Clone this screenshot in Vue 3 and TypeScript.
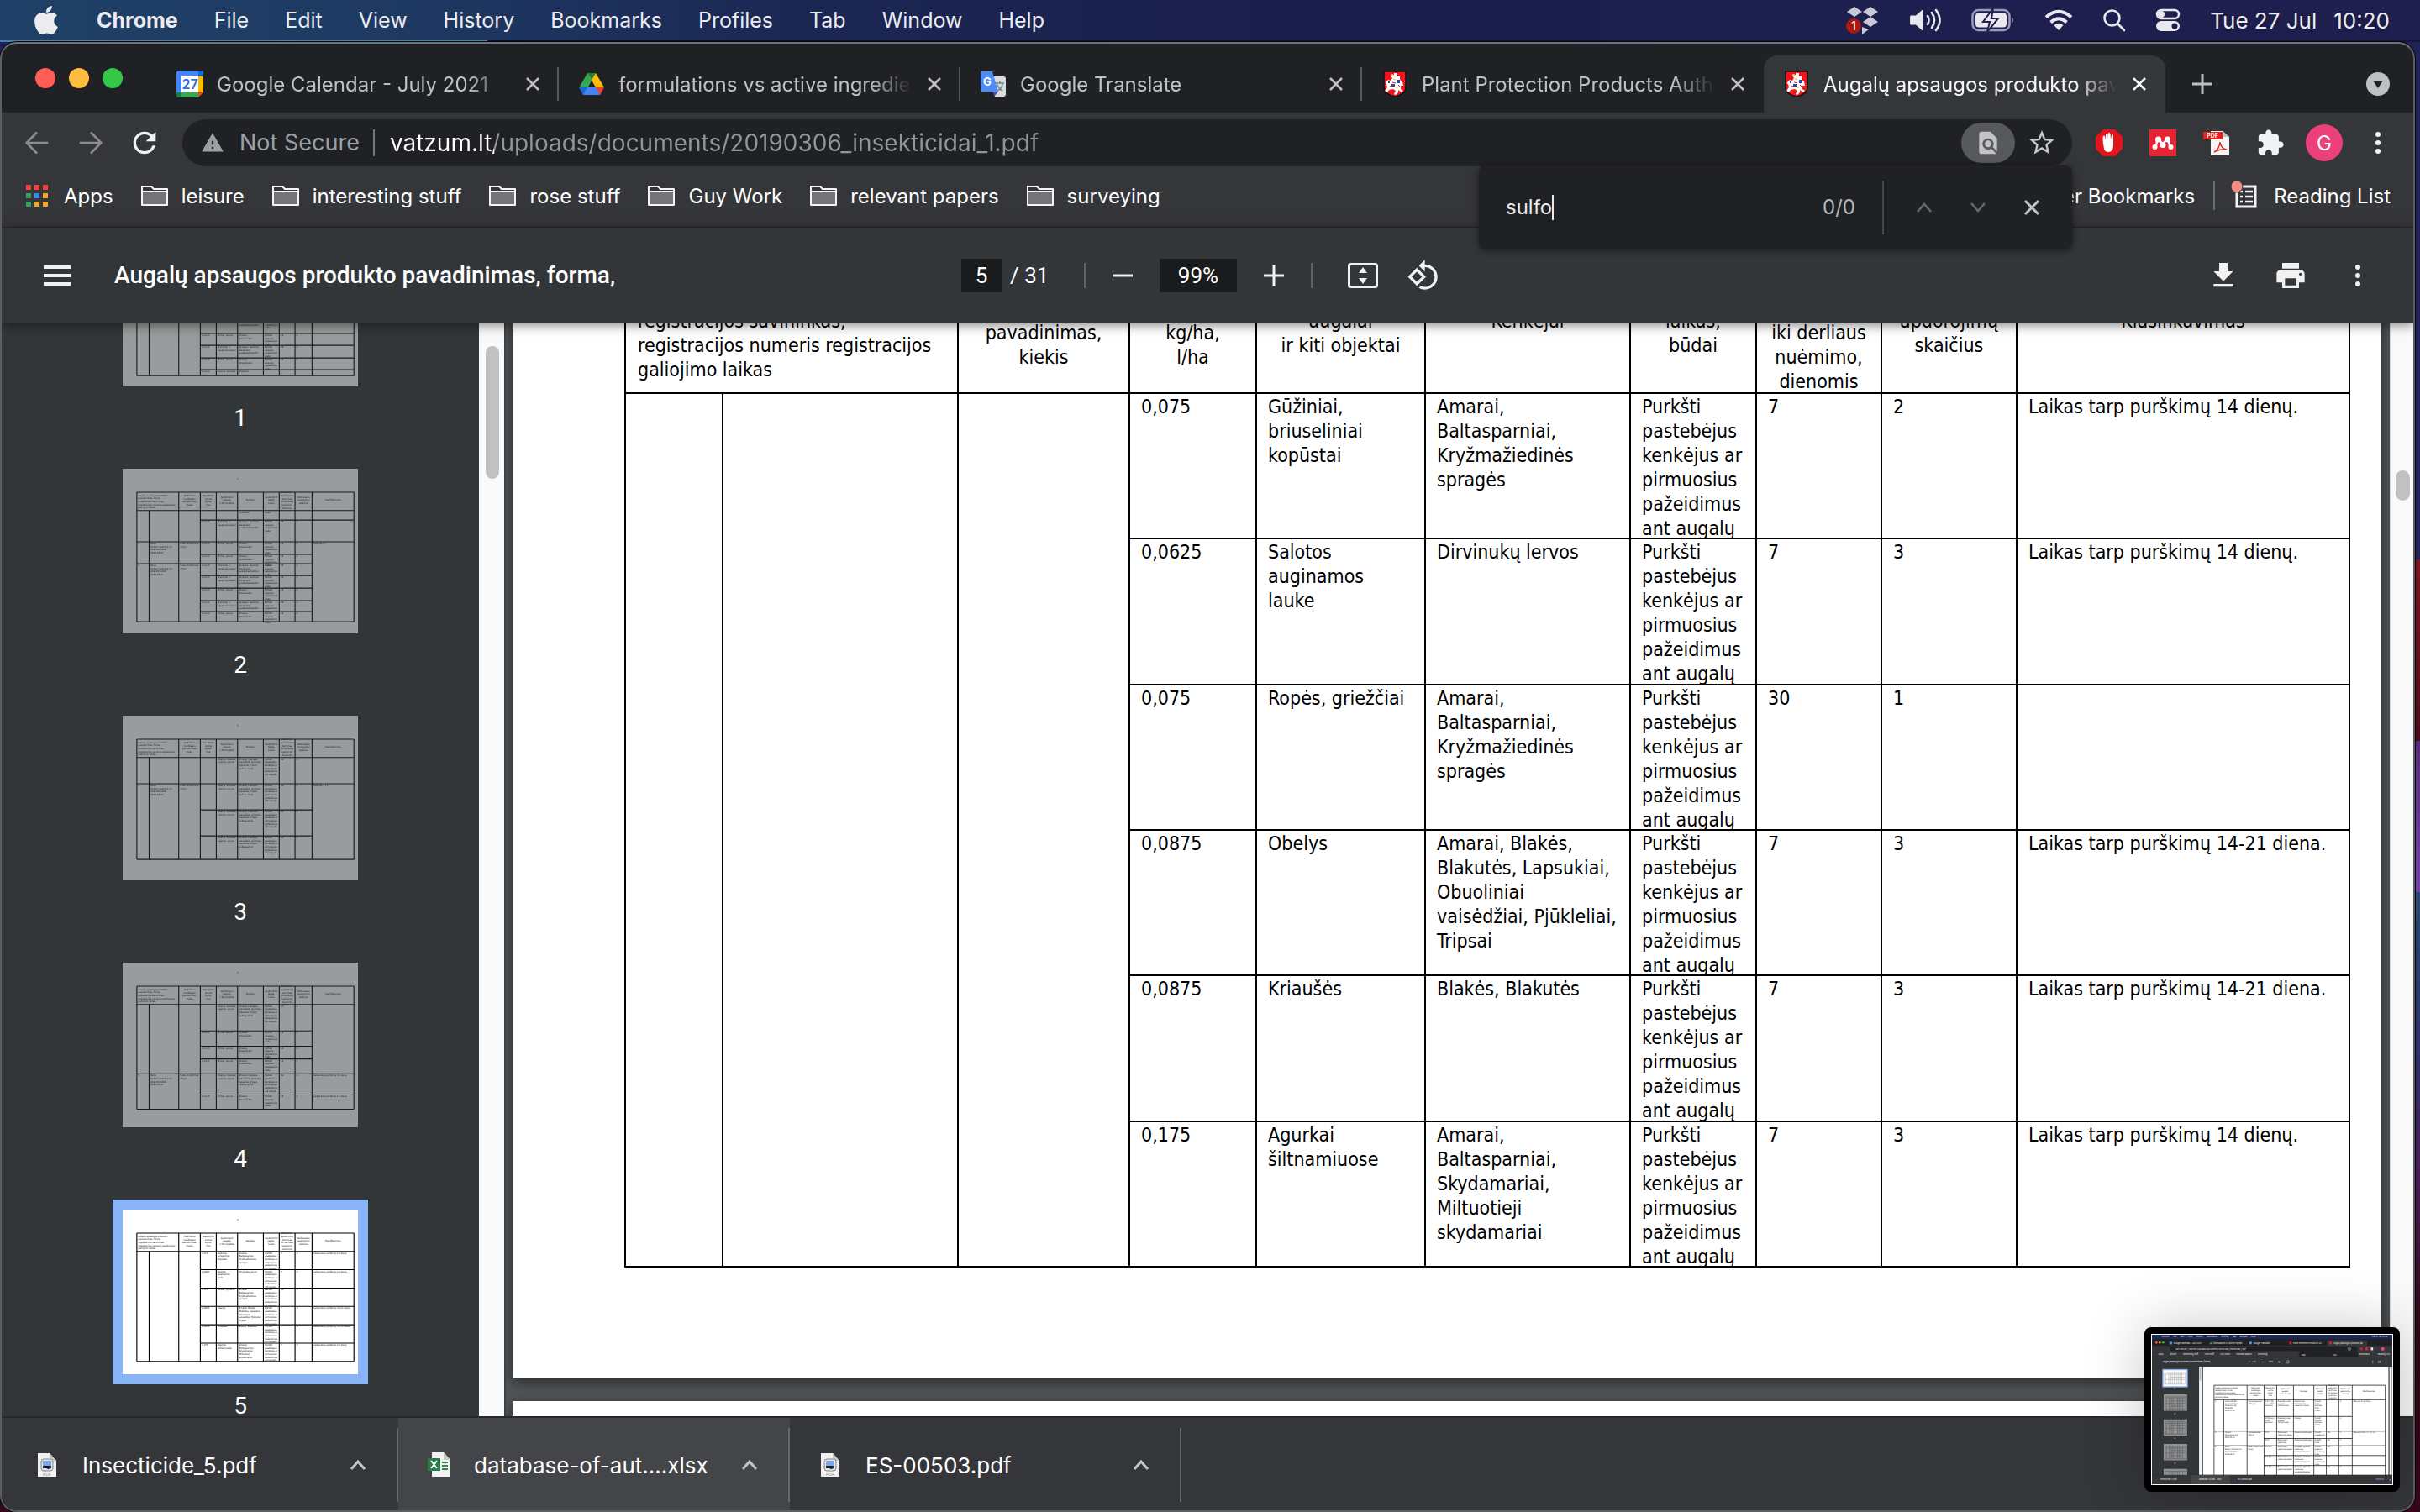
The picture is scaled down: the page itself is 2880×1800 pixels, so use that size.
<script setup lang="ts">
import { onMounted, ref } from 'vue'

interface Tab { title: string; icon: string; active?: boolean }
interface Row { dose: string; crop: string[]; pests: string[]; days: string; times: string; note: string }
interface MiniCell { c: number; t: string[] }
interface MiniRow { y: number; from: number; to: number; cells: MiniCell[] }
interface Thumb { page: number; bottom: number; rows: MiniRow[] }

const menus: string[] = ['File', 'Edit', 'View', 'History', 'Bookmarks', 'Profiles', 'Tab', 'Window', 'Help']

const tabs: Tab[] = [
  { title: 'Google Calendar - July 2021', icon: 'calendar' },
  { title: 'formulations vs active ingredie', icon: 'drive' },
  { title: 'Google Translate', icon: 'translate' },
  { title: 'Plant Protection Products Auth', icon: 'shield' },
  { title: 'Augalų apsaugos produkto pav', icon: 'shield', active: true },
]

const bookmarks: string[] = ['leisure', 'interesting stuff', 'rose stuff', 'Guy Work', 'relevant papers', 'surveying']

const downloads = [
  { name: 'Insecticide_5.pdf', kind: 'pdf' },
  { name: 'database-of-aut....xlsx', kind: 'xls' },
  { name: 'ES-00503.pdf', kind: 'pdf' },
]

const columnWidths: number[] = [116, 280, 204, 151, 201, 244, 150, 149, 161, 396]

const header: string[][] = [
  ['Veikliosios', 'medžiagos', 'pavadinimas,', 'kiekis'],
  ['Naudojimo', 'norma', 'kg/ha,', 'l/ha'],
  ['Apdorojami', 'augalai', 'ir kiti objektai'],
  ['Kenkėjai'],
  ['Apdorojimo', 'laikas,', 'būdai'],
  ['Paskutinis', 'apdorojimo', 'terminas', 'iki derliaus', 'nuėmimo,', 'dienomis'],
  ['Didžiausias', 'apdorojimų', 'skaičius'],
  ['Klasifikavimas'],
]
const firstHeader: string[] = [
  'Augalų apsaugos produkto', 'pavadinimas, forma,', 'registracijos savininkas,',
  'registracijos numeris registracijos', 'galiojimo laikas',
]
const method: string[] = ['Purkšti', 'pastebėjus', 'kenkėjus ar', 'pirmuosius', 'pažeidimus', 'ant augalų']

const rows: Row[] = [
  { dose: '0,075', crop: ['Gūžiniai,', 'briuseliniai', 'kopūstai'], pests: ['Amarai,', 'Baltasparniai,', 'Kryžmažiedinės', 'spragės'], days: '7', times: '2', note: 'Laikas tarp purškimų 14 dienų.' },
  { dose: '0,0625', crop: ['Salotos', 'auginamos', 'lauke'], pests: ['Dirvinukų lervos'], days: '7', times: '3', note: 'Laikas tarp purškimų 14 dienų.' },
  { dose: '0,075', crop: ['Ropės, griežčiai'], pests: ['Amarai,', 'Baltasparniai,', 'Kryžmažiedinės', 'spragės'], days: '30', times: '1', note: '' },
  { dose: '0,0875', crop: ['Obelys'], pests: ['Amarai, Blakės,', 'Blakutės, Lapsukiai,', 'Obuoliniai', 'vaisėdžiai, Pjūkleliai,', 'Tripsai'], days: '7', times: '3', note: 'Laikas tarp purškimų 14-21 diena.' },
  { dose: '0,0875', crop: ['Kriaušės'], pests: ['Blakės, Blakutės'], days: '7', times: '3', note: 'Laikas tarp purškimų 14-21 diena.' },
  { dose: '0,175', crop: ['Agurkai', 'šiltnamiuose'], pests: ['Amarai,', 'Baltasparniai,', 'Skydamariai,', 'Miltuotieji', 'skydamariai'], days: '7', times: '3', note: 'Laikas tarp purškimų 14 dienų.' },
]

/* Column edges of the registry table, in page units */
const edges: number[] = [134, 250, 530, 734, 885, 1086, 1330, 1480, 1629, 1790, 2186]

const spray: string[] = ['Purkšti', 'augalus', 'vegetacijos', 'metu']
const often: MiniCell[] = [
  { c: 3, t: ['0,2-0,3'] }, { c: 4, t: ['Žieminiai ir', 'vasariniai rapsai'] },
  { c: 5, t: ['Spragės, rapsiniai', 'žiedinukai,', 'paslėptastraubliai'] }, { c: 6, t: spray }, { c: 7, t: ['56'] }, { c: 8, t: ['2'] },
]
const veg: MiniCell[] = [
  { c: 3, t: ['0,2-0,3'] }, { c: 4, t: ['Žirniai, pupos'] },
  { c: 5, t: ['Amarai,', 'straubliukai'] }, { c: 6, t: spray }, { c: 7, t: ['14'] }, { c: 8, t: ['2'] },
]
const owner: MiniCell[] = [
  { c: 0, t: ['5.'] }, { c: 1, t: ['Kaiso', 'Nufarm GmbH & Co', 'AS2-11I(2018)', '2028-08-24'] }, { c: 2, t: ['Beta-cihalotrinas', '25 g/l'] },
]
const leaf: MiniCell[] = [{ c: 4, t: ['Obelys, kriaušės,', 'vyšnios, slyvos'] }, { c: 5, t: ['Amarai, blakutės,', 'vaisėdžiai, pjūkleliai,', 'lapsukiai, tripsai,', 'baltasparniai'] }, { c: 6, t: method }, { c: 7, t: ['30'] }, { c: 8, t: ['2'] }]

const thumbs: Thumb[] = [
  { page: 1, bottom: 1454, rows: [
    { y: 395, from: 0, to: 10, cells: often },
    { y: 900, from: 3, to: 10, cells: often },
    { y: 1056, from: 3, to: 10, cells: veg },
    { y: 1168, from: 3, to: 10, cells: often },
    { y: 1287, from: 3, to: 10, cells: veg },
    { y: 1398, from: 3, to: 10, cells: [{ c: 3, t: ['0,2-0,3'] }, { c: 4, t: ['Obelys, kriaušės'] }, { c: 5, t: ['Blakutės,'] }] },
  ] },
  { page: 2, bottom: 1446, rows: [
    { y: 395, from: 0, to: 10, cells: [{ c: 5, t: ['straubliai'] }, { c: 6, t: ['metu'] }] },
    { y: 485, from: 3, to: 10, cells: often },
    { y: 691, from: 0, to: 10, cells: [...owner, ...veg, { c: 9, t: ['Pakuotė 5 l.'] }] },
    { y: 810, from: 3, to: 9, cells: veg },
    { y: 898, from: 0, to: 9, cells: [...owner, ...often] },
    { y: 1009, from: 3, to: 9, cells: often },
    { y: 1128, from: 3, to: 9, cells: veg },
    { y: 1247, from: 3, to: 9, cells: often },
    { y: 1350, from: 3, to: 9, cells: veg },
  ] },
  { page: 3, bottom: 1358, rows: [
    { y: 395, from: 0, to: 10, cells: leaf },
    { y: 643, from: 0, to: 10, cells: [...owner, ...leaf, { c: 9, t: ['Pakuotė 1 l; 5 l.'] }] },
    { y: 890, from: 3, to: 9, cells: leaf },
    { y: 1136, from: 3, to: 9, cells: leaf },
  ] },
  { page: 4, bottom: 1386, rows: [
    { y: 395, from: 0, to: 10, cells: leaf },
    { y: 645, from: 3, to: 9, cells: veg },
    { y: 790, from: 3, to: 9, cells: veg },
    { y: 910, from: 3, to: 9, cells: veg },
    { y: 1050, from: 0, to: 10, cells: [...owner, ...leaf, { c: 9, t: ['Laikas tarp purškimų 14 dienų.'] }] },
    { y: 1250, from: 3, to: 10, cells: [...veg, { c: 9, t: ['Laikas tarp purškimų 14 dienų.'] }] },
  ] },
  { page: 5, bottom: 1435, rows: rows.map((r, i) => ({
    y: 395 + Math.round(i * 173.4), from: i ? 3 : 0, to: 10,
    cells: [
      { c: 3, t: [r.dose] }, { c: 4, t: r.crop }, { c: 5, t: r.pests }, { c: 6, t: method },
      { c: 7, t: [r.days] }, { c: 8, t: [r.times] }, { c: 9, t: [r.note] },
    ],
  })) },
]

/* Rows shown in the floating capture preview */
const previewRows: MiniRow[] = [
  { y: 782, from: 0, to: 10, cells: [{ c: 0, t: ['1.'] }, { c: 1, t: ['Actara 25 WG', 'Syngenta Crop', 'Protection AG,', '0152I/08,', '2019-04-30'] }, { c: 2, t: ['Tiametoksamas', '250 g/kg'] }, { c: 3, t: ['0,04-0,06', 'kg ir 1000', 'vandens'] }, { c: 4, t: ['Dekoratyviniai', 'augalai', 'šiltnamiuose'] }, { c: 5, t: ['Šiltnaminiai', 'baltasparniai,', 'vakariniai tripsai'] }, { c: 6, t: ['Purkšti', 'tiriamų', 'atitinka', '0,04-', '0,06%'] }, { c: 8, t: ['2'] }, { c: 9, t: ['Pakuotė 40 g, 250 g.'] }] },
  { y: 984, from: 3, to: 9, cells: [{ c: 3, t: ['10,02 kg ir', '1000', 'vandens'] }, { c: 4, t: ['Dekoratyviniai', 'augalai', 'šiltnamiuose'] }, { c: 5, t: ['Amarai'] }, { c: 6, t: ['Purkšti', 'tiriamų', 'atitinka', '0,02%'] }, { c: 8, t: ['2'] }] },
  { y: 1161, from: 0, to: 10, cells: [{ c: 0, t: ['2.'] }, { c: 1, t: ['Avaunt', 'Cheminova A/S,', '2020-10-31'] }, { c: 2, t: ['Indoksakarbas', '150 g/l'] }, { c: 3, t: ['0,17'] }, { c: 4, t: ['Žieminiai ir', 'vasariniai rapsai'] }, { c: 5, t: ['Rapsiniai žiedinukai'] }, { c: 6, t: ['Purkšti', 'vegetacijos'] }, { c: 7, t: ['56'] }, { c: 8, t: ['1'] }, { c: 9, t: ['Pakuotė 0,25 l; 1 l; 3 l; 5 l.'] }] },
  { y: 1249, from: 3, to: 9, cells: [{ c: 3, t: ['0,17'] }, { c: 4, t: ['Žieminiai ir', 'vasariniai'] }, { c: 5, t: ['Rapsiniai žiedinukai'] }, { c: 6, t: ['Purkšti', 'metu'] }, { c: 7, t: ['56'] }, { c: 8, t: ['1'] }] },
  { y: 1336, from: 0, to: 10, cells: [...owner, ...often] },
  { y: 1454, from: 3, to: 10, cells: often },
  { y: 1574, from: 3, to: 10, cells: often.filter((c) => c.c !== 6) },
]

const findText = ref('sulfo')
const url = ref('vatzum.lt/uploads/documents/20190306_insekticidai_1.pdf')
const pageNumber = ref('5')
const zoom = ref('99%')
const sidebar = ref<HTMLElement | null>(null)
const viewer = ref<HTMLElement | null>(null)

/* Reading position in the document and in the thumbnail list */
onMounted(() => {
  if (sidebar.value) sidebar.value.scrollTop = 144
  if (viewer.value) viewer.value.scrollTop = 321
})
</script>

<template>
  <div class="desktop">
    <header class="menubar">
      <nav class="menus" aria-label="Menu bar">
        <button class="menu apple" aria-label="Apple menu">
          <svg width="34" height="34" viewBox="0 0 24 24" fill="#ececee"><path d="M12.152 6.896c-.948 0-2.415-1.078-3.96-1.04-2.04.027-3.91 1.183-4.961 3.014-2.117 3.675-.546 9.103 1.519 12.09 1.013 1.454 2.208 3.09 3.792 3.039 1.52-.065 2.09-.987 3.935-.987 1.831 0 2.35.987 3.96.948 1.637-.026 2.676-1.48 3.676-2.948 1.156-1.688 1.636-3.325 1.662-3.415-.039-.013-3.182-1.221-3.22-4.857-.026-3.04 2.48-4.494 2.597-4.559-1.429-2.09-3.623-2.324-4.39-2.376-2-.156-3.675 1.09-4.61 1.09zM15.53 3.83c.843-1.012 1.4-2.427 1.245-3.83-1.207.052-2.662.805-3.532 1.818-.78.896-1.454 2.338-1.273 3.714 1.338.104 2.715-.688 3.559-1.701" /></svg>
        </button>
        <button class="menu strong">Chrome</button>
        <button v-for="m in menus" :key="m" class="menu">{{ m }}</button>
      </nav>
      <div class="status">
        <svg width="42" height="36" viewBox="0 0 42 36">
          <path d="M11 2l9 6-9 6-9-6zM30 2l9 6-9 6-9-6zM30 14l9 6-9 6-9-6zM20 26l8 3-8 6z" fill="#c9cad6" />
          <circle cx="10" cy="25" r="9" fill="#ad1a10" />
          <text x="10" y="30" fill="#fff" font-size="14" text-anchor="middle" class="ui">1</text>
        </svg>
        <svg width="38" height="30" viewBox="0 0 38 30" fill="none" stroke="#e8e8ee" stroke-width="2.6" stroke-linecap="round">
          <path d="M1 10h6l8-7v24l-8-7H1z" fill="#e8e8ee" stroke-width="1" /><path d="M21 10q3 5 0 10M26 6q6 9 0 18M31 3q9 12 0 24" />
        </svg>
        <svg width="52" height="28" viewBox="0 0 52 28">
          <rect x="1.500" y="2" width="44" height="24" rx="7" fill="none" stroke="#9c9cb6" stroke-width="2.500" />
          <rect x="5" y="5.500" width="37" height="17" rx="4" fill="#e8e8ee" /><path d="M48 10q4 4 0 8z" fill="#9c9cb6" />
          <path d="M26 0L14 16h8l-3 12 13-16h-8z" fill="#e8e8ee" stroke="#1e1e4e" stroke-width="2" />
        </svg>
        <svg width="34" height="26" viewBox="0 0 34 26" fill="none" stroke="#e8e8ee" stroke-width="4">
          <path d="M2 9.500Q17-4 32 9.500M7.500 15.500Q17 7 26.500 15.500" /><path d="M17 25l-5.500-6Q17 14.500 22.500 19z" fill="#e8e8ee" stroke="none" />
        </svg>
        <svg width="28" height="28" viewBox="0 0 28 28" fill="none" stroke="#e8e8ee" stroke-width="2.600" stroke-linecap="round"><circle cx="11.500" cy="11.500" r="9" /><path d="M18 18l8 8" /></svg>
        <svg width="30" height="28" viewBox="0 0 30 28">
          <rect x="2" y="2" width="26" height="10" rx="5" fill="none" stroke="#e8e8ee" stroke-width="2.500" /><circle cx="7" cy="7" r="4" fill="#e8e8ee" />
          <rect x="1" y="15" width="28" height="12" rx="6" fill="#e8e8ee" /><circle cx="23" cy="21" r="3.500" fill="#1e1e4e" />
        </svg>
        <time class="clock"><span>Tue 27 Jul</span><span>10:20</span></time>
      </div>
    </header>

    <main class="window">
      <div class="tabstrip">
        <div class="lights">
          <button class="light red" aria-label="Close window"></button>
          <button class="light amber" aria-label="Minimise window"></button>
          <button class="light green" aria-label="Zoom window"></button>
        </div>
        <div v-for="(t, i) in tabs" :key="i" class="tab" :class="{ active: t.active, bare: i === 3 }">
          <svg v-if="t.icon === 'calendar'" class="favicon" width="32" height="32" viewBox="0 0 32 32">
            <path d="M2 0h24v8H8v18H0V2q0-2 2-2z" fill="#4285f4" /><path d="M26 0h4q2 0 2 2v5h-6z" fill="#1967d2" /><path d="M26 7h6v19h-6z" fill="#fbbc04" /><path d="M6 26h20v6H6z" fill="#34a853" /><path d="M0 26h6v6H2q-2 0-2-2z" fill="#188038" /><path d="M26 26h6l-6 6z" fill="#ea4335" />
            <path d="M6 6h20v20H6z" fill="#fff" /><text x="16" y="22" font-size="16" font-weight="600" text-anchor="middle" fill="#2b6fe0" class="ui">27</text>
          </svg>
          <svg v-else-if="t.icon === 'drive'" class="favicon" width="32" height="32" viewBox="0 0 32 32">
            <path d="M11 3h10l-5 9-8 15-6-8z" fill="#34a853" /><path d="M11 3h10l10 17H21z" fill="#fbbc04" /><path d="M11 3h10l-5 8z" fill="#188038" /><path d="M9 20h14l4 8q-1 1-3 1H8q-2 0-3-1z" fill="#4285f4" /><path d="M1 20h10l-5 9z" fill="#1967d2" /><path d="M21 20h10l-5 9z" fill="#ea4335" />
          </svg>
          <svg v-else-if="t.icon === 'translate'" class="favicon" width="32" height="32" viewBox="0 0 32 32">
            <path d="M12 7h16q3 0 3 3v18q0 3-3 3H18z" fill="#dcdcdc" /><path d="M3 1h12l7 24H3q-2 0-2-2V3q0-2 2-2z" fill="#4e8df5" /><path d="M16 25h6l-5 6z" fill="#3a50c8" />
            <text x="9" y="18" font-size="13" font-weight="700" text-anchor="middle" fill="#fff" class="ui">G</text><path d="M19 15h10M24 12v3M21 24q6-3 6-9M21 17q2 5 6 7" stroke="#6f8790" stroke-width="1.600" fill="none" />
          </svg>
          <svg v-else class="favicon shield" width="28" height="32" viewBox="0 0 28 32">
            <path d="M1 1h26v19q0 8-13 11Q1 28 1 20z" fill="#f4141c" stroke="#111" stroke-width="1.500" />
            <path d="M13 3h4v4h3v4l3 2 1 5h-3v4l3 2-2 2-4-3v3l-3 3-2-1 2-4-3-2-5 1-2 3-3-2 3-4-1-4H3v-2l3-3 3 1 2-3-2-3 4-1z" fill="#fff" />
            <path d="M17 11h3v4h-3zM10 16h4v3h-4zM6 13h2v2H6z" fill="#2540c8" /><path d="M9 5h3M12 10l3 1M15 19l2 2" stroke="#f3d64a" stroke-width="1.500" /><path d="M11 14l4 1M8 19l4-1M18 17l2 2" stroke="#d3161c" />
          </svg>
          <span class="tab-title">{{ t.title }}</span>
          <button class="close" aria-label="Close tab"><svg width="20" height="20" viewBox="0 0 20 20"><path d="M3 3l14 14M17 3L3 17" stroke="currentColor" stroke-width="2.600" /></svg></button>
        </div>
        <button class="newtab" aria-label="New tab"><svg width="24" height="24" viewBox="0 0 24 24"><path d="M12 0v24M0 12h24" stroke="#bdc1c6" stroke-width="3" /></svg></button>
        <button class="tabsearch" aria-label="Search tabs"><svg width="28" height="28" viewBox="0 0 28 28"><circle cx="14" cy="14" r="14" fill="#bdc1c6" /><path d="M8 10h12l-6 9z" fill="#202124" /></svg></button>
      </div>

      <div class="toolbar">
        <button class="nav dim" aria-label="Back"><svg width="40" height="40" viewBox="0 0 24 24" fill="none" stroke="#8b8c8f" stroke-width="1.600"><path d="M20 12H5M12 4.500L4.600 12l7.400 7.500" /></svg></button>
        <button class="nav dim" aria-label="Forward"><svg width="40" height="40" viewBox="0 0 24 24" fill="none" stroke="#8b8c8f" stroke-width="1.600"><path d="M4 12h15M12 4.500l7.400 7.500-7.400 7.500" /></svg></button>
        <button class="nav" aria-label="Reload"><svg width="40" height="40" viewBox="0 0 24 24" fill="#f1f3f4"><path d="M17.650 6.350A7.958 7.958 0 0 0 12 4c-4.420 0-7.990 3.580-7.990 8s3.570 8 7.990 8c3.730 0 6.840-2.550 7.730-6h-2.080A5.990 5.990 0 0 1 12 18c-3.310 0-6-2.690-6-6s2.690-6 6-6c1.660 0 3.140.690 4.220 1.780L13 11h7V4l-2.350 2.350z" /></svg></button>
        <div class="omnibox">
          <svg width="28" height="28" viewBox="0 0 24 24" fill="#9aa0a6"><path d="M1 21h22L12 2 1 21zm12-3h-2v-2h2v2zm0-4h-2v-4h2v4z" /></svg>
          <span class="insecure">Not Secure</span>
          <input v-model="url" class="url" aria-label="Address" type="text" />
          <button class="findchip" aria-label="Find in page"><svg width="32" height="32" viewBox="0 0 24 24" fill="#c2c3c5"><path d="M20 19.590V8l-6-6H6c-1.100 0-1.990.900-1.990 2L4 20c0 1.100.890 2 1.990 2H18c.450 0 .850-.150 1.190-.400l-4.430-4.430c-.800.520-1.740.830-2.760.830-2.760 0-5-2.240-5-5s2.240-5 5-5 5 2.240 5 5c0 1.020-.310 1.960-.830 2.750L20 19.590zM9 13c0 1.660 1.340 3 3 3s3-1.340 3-3-1.340-3-3-3-3 1.340-3 3z" /></svg></button>
          <button class="star" aria-label="Bookmark this page"><svg width="36" height="36" viewBox="0 0 24 24" fill="#c8c9cb"><path d="M22 9.240l-7.190-.620L12 2 9.190 8.630 2 9.240l5.460 4.730L5.820 21 12 17.270 18.180 21l-1.630-7.030L22 9.240zM12 15.400l-3.760 2.270 1-4.280-3.320-2.880 4.380-.380L12 6.100l1.710 4.040 4.380.380-3.320 2.880 1 4.280L12 15.400z" /></svg></button>
        </div>
        <div class="extensions">
          <button class="ext" aria-label="Ad blocker"><svg width="32" height="32" viewBox="0 0 32 32"><path d="M9 0h14l9 9v14l-9 9H9l-9-9V9z" fill="#e0161c" /><path d="M9 17q-1-7 0-9 1-1 2 0l1 5V6q1-2 2.500 0v6l.500-7q1-2 2.500 0l.500 7 1-5q1-2 2 0v12q0 8-6 8-4 0-5-4z" fill="#fff" /></svg></button>
          <button class="ext" aria-label="Mendeley"><svg width="32" height="32" viewBox="0 0 32 32"><path d="M0 0h32v32H0z" fill="#e72434" /><path d="M7 21q2-3 2-9 4-1 7 7 3-8 7-7 0 6 2 9" fill="none" stroke="#fff" stroke-width="2.500" /><g fill="#fff"><circle cx="10.500" cy="12" r="3.500" /><circle cx="21.500" cy="12" r="3.500" /><circle cx="6.500" cy="21" r="3" /><circle cx="25.500" cy="21" r="3" /><circle cx="16" cy="18.500" r="3.500" /></g></svg></button>
          <button class="ext" aria-label="PDF extension"><svg width="32" height="32" viewBox="0 0 32 32"><path d="M9 2h14l8 7v22H9z" fill="#f6f6f6" /><path d="M23 2l8 7h-8z" fill="#bbb" /><path d="M0 3h23v9H0z" fill="#e2231a" /><text x="11" y="10" font-size="7" font-weight="600" text-anchor="middle" fill="#fff" class="ui">PDF</text><path d="M13 27q6-3 7-12 1 8 8 9-8-1-15 3z" fill="none" stroke="#e2231a" stroke-width="1.400" /></svg></button>
          <button class="ext" aria-label="Extensions"><svg width="34" height="34" viewBox="0 0 24 24" fill="#f1f3f4"><path d="M20.500 11H19V7c0-1.100-.900-2-2-2h-4V3.500C13 2.120 11.880 1 10.500 1S8 2.120 8 3.500V5H4c-1.100 0-1.990.900-1.990 2v3.800H3.500c1.490 0 2.700 1.210 2.700 2.700s-1.210 2.700-2.700 2.700H2V20c0 1.100.900 2 2 2h3.800v-1.500c0-1.490 1.210-2.700 2.700-2.700 1.490 0 2.700 1.210 2.700 2.700V22H17c1.100 0 2-.900 2-2v-4h1.500c1.380 0 2.500-1.120 2.500-2.500S21.880 11 20.500 11z" /></svg></button>
          <button class="ext avatar" aria-label="Profile">G</button>
          <button class="ext" aria-label="Chrome menu"><svg width="8" height="28" viewBox="0 0 8 28" fill="#f1f3f4"><circle cx="4" cy="4" r="3" /><circle cx="4" cy="14" r="3" /><circle cx="4" cy="24" r="3" /></svg></button>
        </div>
      </div>

      <nav class="bookmarks" aria-label="Bookmarks">
        <a class="bookmark apps" href="#apps">
          <svg width="26" height="26" viewBox="0 0 26 26"><path d="M0 0h6v6H0zM10 0h6v6h-6zM20 0h6v6h-6z" fill="#f0433a" /><path d="M0 10h6v6H0zM0 20h6v6H0z" fill="#35a35a" /><path d="M10 10h6v6h-6z" fill="#2f8df5" /><path d="M20 10h6v6h-6zM10 20h6v6h-6zM20 20h6v6h-6z" fill="#f5a623" /></svg>
          Apps
        </a>
        <a v-for="b in bookmarks" :key="b" class="bookmark" href="#folder">
          <svg width="32" height="26" viewBox="0 0 32 26"><path d="M1 24V2h11l3 3h16v19z" fill="#35363a" stroke="#f4f4f4" stroke-width="2" stroke-linejoin="round" /><path d="M2 9h28v14H2z" fill="#737477" /><path d="M1 8h30" stroke="#f4f4f4" stroke-width="2" /></svg>
          {{ b }}
        </a>
        <a class="bookmark other" href="#other">Other Bookmarks</a>
        <a class="bookmark reading" href="#reading">
          <svg width="34" height="34" viewBox="0 0 34 34"><path d="M8 6h22v24H8z" fill="none" stroke="#f4f4f4" stroke-width="3" /><path d="M12 12h3M18 12h9M12 18h3M18 18h9M12 24h3M18 24h9" stroke="#f4f4f4" stroke-width="2.500" /><circle cx="8" cy="6" r="7" fill="#f28b82" stroke="#35363a" /></svg>
          Reading List
        </a>
      </nav>

      <div class="pdfbar">
        <div class="side">
          <button class="burger" aria-label="Toggle sidebar"><svg width="32" height="24" viewBox="0 0 32 24"><path d="M0 2h32M0 12h32M0 22h32" stroke="#f1f1f1" stroke-width="4" /></svg></button>
          <h1 class="doc-title">Augalų apsaugos produkto pavadinimas, forma,</h1>
        </div>
        <div class="controls">
          <input v-model="pageNumber" class="field page-no" aria-label="Page number" type="text" />
          <span class="total">/ 31</span>
          <i class="sep"></i>
          <button class="zoom-btn" aria-label="Zoom out"><svg width="24" height="24" viewBox="0 0 24 24"><path d="M0 12h24" stroke="#f1f1f1" stroke-width="3" /></svg></button>
          <input v-model="zoom" class="field zoom" aria-label="Zoom level" type="text" />
          <button class="zoom-btn" aria-label="Zoom in"><svg width="24" height="24" viewBox="0 0 24 24"><path d="M0 12h24M12 0v24" stroke="#f1f1f1" stroke-width="3" /></svg></button>
          <i class="sep fit-sep"></i>
          <button class="tool" aria-label="Fit to page"><svg width="36" height="30" viewBox="0 0 36 30"><rect x="1.500" y="1.500" width="33" height="27" rx="2" fill="none" stroke="#f1f1f1" stroke-width="3" /><path d="M18 5l5 7H13zM18 25l5-7H13z" fill="#f1f1f1" /></svg></button>
          <button class="tool" aria-label="Rotate"><svg width="40" height="40" viewBox="0 0 24 24" fill="#f1f1f1"><path d="M7.340 6.410L.860 12.900l6.490 6.480 6.490-6.480-6.500-6.490zM3.690 12.900l3.660-3.660L11 12.900l-3.660 3.660-3.650-3.660zm15.670-6.260A8.950 8.950 0 0 0 13 4V.760L8.760 5 13 9.240V6c1.790 0 3.580.680 4.950 2.050a7.007 7.007 0 0 1 0 9.900 6.973 6.973 0 0 1-7.790 1.440l-1.490 1.490C10.020 21.620 11.510 22 13 22c2.300 0 4.610-.880 6.360-2.640a8.980 8.980 0 0 0 0-12.720z" /></svg></button>
        </div>
        <div class="side end">
          <button class="action" aria-label="Download"><svg width="40" height="40" viewBox="0 0 24 24" fill="#f1f1f1"><path d="M19 9h-4V3H9v6H5l7 7 7-7zM5 18v2h14v-2H5z" /></svg></button>
          <button class="action" aria-label="Print"><svg width="40" height="40" viewBox="0 0 24 24" fill="#f1f1f1"><path d="M19 8H5c-1.660 0-3 1.340-3 3v6h4v4h12v-4h4v-6c0-1.660-1.340-3-3-3zm-3 11H8v-5h8v5zm3-7c-.550 0-1-.450-1-1s.450-1 1-1 1 .450 1 1-.450 1-1 1zm-1-9H6v4h12V3z" /></svg></button>
          <button class="action" aria-label="More actions"><svg width="8" height="28" viewBox="0 0 8 28" fill="#f1f1f1"><circle cx="4" cy="4" r="3" /><circle cx="4" cy="14" r="3" /><circle cx="4" cy="24" r="3" /></svg></button>
        </div>
      </div>

      <section class="content">
        <div ref="sidebar" class="sidebar">
          <button v-for="t in thumbs" :key="t.page" class="thumb" :class="{ current: t.page === 5 }" :aria-label="'Page ' + t.page">
            <svg class="sheet" width="280" height="196" viewBox="0 0 2224 1556" preserveAspectRatio="none">
              <rect width="2224" height="1556" fill="#fff" />
              <g stroke="#000" stroke-width="9">
                <path d="M134 222H2186" />
                <path v-for="(e, k) in edges" :key="'v' + k" :d="`M${e} ${k === 1 ? 395 : 222}V${t.bottom}`" />
                <path v-for="r in t.rows" :key="'h' + r.y" :d="`M${edges[r.from]} ${r.y}H${edges[r.to]}`" />
                <path :d="`M134 ${t.bottom}H2186`" />
              </g>
              <g class="mini">
                <text x="1080" y="100">{{ t.page }}</text>
                <text v-for="(l, k) in firstHeader" :key="'f' + k" x="148" :y="260 + k * 29">{{ l }}</text>
                <template v-for="(h, k) in header" :key="'c' + k">
                  <text v-for="(l, n) in h" :key="n" :x="(edges[k + 2] + edges[k + 3]) / 2" :y="318 - h.length * 14 + n * 29" text-anchor="middle">{{ l }}</text>
                </template>
                <template v-for="r in t.rows" :key="'r' + r.y">
                  <template v-for="c in r.cells" :key="c.c">
                    <text v-for="(l, n) in c.t" :key="n" :x="edges[c.c] + 14" :y="r.y + 24 + n * 29">{{ l }}</text>
                  </template>
                </template>
              </g>
            </svg>
            <span class="thumb-no">{{ t.page }}</span>
          </button>
        </div>
        <div class="track side-track"><div class="grip long"></div></div>
        <div ref="viewer" class="viewer">
          <article class="page">
            <table class="registry">
              <colgroup><col v-for="(w, i) in columnWidths" :key="i" :style="{ width: w + 'px' }" /></colgroup>
              <thead>
                <tr>
                  <th colspan="2" class="first"><div class="cell mid"><span v-for="l in firstHeader" :key="l">{{ l }}</span></div></th>
                  <th v-for="(h, i) in header" :key="i"><div class="cell mid"><span v-for="l in h" :key="l">{{ l }}</span></div></th>
                </tr>
              </thead>
              <tbody>
                <tr v-for="(r, i) in rows" :key="i">
                  <td v-if="i === 0" rowspan="6"></td>
                  <td v-if="i === 0" rowspan="6"></td>
                  <td v-if="i === 0" rowspan="6"></td>
                  <td><div class="cell">{{ r.dose }}</div></td>
                  <td><div class="cell"><span v-for="l in r.crop" :key="l">{{ l }}</span></div></td>
                  <td><div class="cell"><span v-for="l in r.pests" :key="l">{{ l }}</span></div></td>
                  <td><div class="cell"><span v-for="l in method" :key="l">{{ l }}</span></div></td>
                  <td><div class="cell">{{ r.days }}</div></td>
                  <td><div class="cell">{{ r.times }}</div></td>
                  <td><div class="cell">{{ r.note }}</div></td>
                </tr>
              </tbody>
            </table>
          </article>
          <article class="page next"></article>
        </div>
        <div class="track main-track"><div class="grip short"></div></div>
      </section>

      <footer class="shelf">
        <div v-for="(d, i) in downloads" :key="d.name" class="download" :class="{ hover: i === 1 }">
          <button class="file">
            <svg v-if="d.kind === 'pdf'" width="28" height="30" viewBox="0 0 28 30"><path d="M3 1h14l8 9v19H3z" fill="#f0f0f0" /><path d="M17 1l8 9h-8z" fill="#c6c6c6" /><rect x="7" y="8" width="14" height="14" rx="3" fill="#dfe3ea" stroke="#888" /><path d="M9 10h10v6H9z" fill="#7ea6e6" /><path d="M9 16h10v3l-4 1-2-1H9z" fill="#1c2430" /><text x="14" y="28" font-size="5" text-anchor="middle" fill="#888" class="ui">PDF</text></svg>
            <svg v-else width="28" height="30" viewBox="0 0 28 30"><path d="M6 0h14l8 9v20H6z" fill="#f2f2f2" /><path d="M20 0l8 9h-8z" fill="#c9c9c9" /><path d="M18 12h7M18 16h7M18 20h7" stroke="#2b8a50" stroke-width="2" stroke-dasharray="3 1" /><path d="M1 7h15v15H1z" fill="#2a7d4a" /><path d="M5 10l7 9M12 10l-7 9" stroke="#fff" stroke-width="2" /></svg>
            <span>{{ d.name }}</span>
          </button>
          <button class="chevron" aria-label="Download options"><svg width="20" height="14" viewBox="0 0 20 14"><path d="M2 12l8-9 8 9" fill="none" stroke="#c4c5c7" stroke-width="3" /></svg></button>
        </div>
      </footer>

      <form class="findbar" @submit.prevent>
        <input v-model="findText" class="find" aria-label="Find in page" type="text" /><i class="caret"></i>
        <span class="count">0/0</span>
        <button type="button" class="find-btn" aria-label="Previous match"><svg width="20" height="14" viewBox="0 0 20 14"><path d="M2 12l8-9 8 9" fill="none" stroke="#66686b" stroke-width="2.600" /></svg></button>
        <button type="button" class="find-btn" aria-label="Next match"><svg width="20" height="14" viewBox="0 0 20 14"><path d="M2 2l8 9 8-9" fill="none" stroke="#66686b" stroke-width="2.600" /></svg></button>
        <button type="button" class="find-btn" aria-label="Close find bar"><svg width="20" height="20" viewBox="0 0 20 20"><path d="M2 2l16 16M18 2L2 18" stroke="#c4c5c7" stroke-width="3" /></svg></button>
      </form>
    </main>

    <aside class="capture" aria-label="Screen capture preview">
      <svg width="286" height="178" viewBox="0 0 2880 1800" preserveAspectRatio="none">
        <rect width="2880" height="1800" fill="#202124" /><rect width="2880" height="48" fill="#1c2a58" />
        <rect y="134" width="2880" height="136" fill="#35363a" /><rect y="66" x="2098" width="480" height="70" rx="14" fill="#35363a" />
        <rect y="142" x="217" width="2249" height="56" rx="28" fill="#202124" /><rect x="1760" y="197" width="706" height="100" fill="#202124" />
        <rect y="272" width="2880" height="112" fill="#323639" /><rect y="384" width="2880" height="1302" fill="#323639" />
        <rect x="565" y="384" width="30" height="1302" fill="#f4f4f4" /><rect x="570" y="400" width="20" height="150" fill="#bbb" />
        <rect x="612" y="384" width="2222" height="1302" fill="#fff" /><rect x="2846" y="384" width="30" height="1302" fill="#f4f4f4" />
        <rect x="124" y="413" width="306" height="220" fill="#8ab4f8" /><rect x="138" y="427" width="278" height="192" fill="#fff" />
        <g v-for="n in 4" :key="n">
          <svg x="138" :y="420 + n * 298" width="284" height="200" viewBox="0 0 284 200"><rect width="284" height="200" fill="#909192" /><path d="M20 30h250v150H20zM20 50h250M34 50v130M70 30v150M94 30v150M114 30v150M138 30v150M170 30v150M190 30v150M208 30v150M228 30v150M94 80h176M20 110h250M94 140h134" fill="none" stroke="#444" stroke-width="4" /></svg>
          <text x="267" :y="364 + n * 298" fill="#fff" font-size="26" class="ui">{{ n }}</text>
        </g>
        <path d="M150 455h250v140H150zM150 475h250M164 475v120M200 455v140M224 455v140M244 455v140M268 455v140M300 455v140M320 455v140M340 455v140M358 455v140M224 510h176M150 540h250" fill="none" stroke="#888" stroke-width="4" />
        <circle cx="54" cy="93" r="12" fill="#ff5f57" /><circle cx="94" cy="93" r="12" fill="#febc2e" /><circle cx="134" cy="93" r="12" fill="#28c840" />
        <g stroke="#000" stroke-width="7" transform="translate(610 0)">
          <path d="M134 608H2186" />
          <path v-for="(e, k) in edges" :key="k" :d="`M${e} ${k === 1 ? 782 : 608}V1688`" />
          <path v-for="r in previewRows" :key="r.y" :d="`M${edges[r.from]} ${r.y}H${edges[r.to]}`" />
        </g>
        <g class="mini" transform="translate(610 0)">
          <text v-for="(l, k) in firstHeader" :key="'f' + k" x="148" :y="646 + k * 29">{{ l }}</text>
          <template v-for="(h, k) in header" :key="'c' + k">
            <text v-for="(l, n) in h" :key="n" :x="(edges[k + 2] + edges[k + 3]) / 2" :y="704 - h.length * 14 + n * 29" text-anchor="middle">{{ l }}</text>
          </template>
          <template v-for="r in previewRows" :key="'r' + r.y">
            <template v-for="c in r.cells" :key="c.c">
              <text v-for="(l, n) in c.t" :key="n" :x="edges[c.c] + 14" :y="r.y + 24 + n * 29">{{ l }}</text>
            </template>
          </template>
        </g>
        <rect y="1688" width="2880" height="112" fill="#35363a" /><rect x="474" y="1688" width="464" height="112" fill="#444548" />
        <g fill="#e8e8ee" font-size="25" class="ui">
          <text x="115" y="34">Chrome</text><text v-for="(m, k) in menus" :key="m" :x="[256, 341, 429, 529, 657, 832, 964, 1049, 1186][k]" y="34">{{ m }}</text>
          <text x="2631" y="34">Tue 27 Jul 10:20</text>
          <text x="258" y="109">Google Calendar - July 2021</text><text x="736" y="109">formulations vs active ingredi</text><text x="1215" y="109">Google Translate</text><text x="1693" y="109">Plant Protection Products Au</text><text x="2171" y="109">Augalų apsaugos produkto pa</text>
          <text x="284" y="180">Not Secure | {{ url }}</text>
          <text x="76" y="243">Apps</text><text v-for="(b, k) in bookmarks" :key="b" :x="[216, 372, 632, 822, 1012, 1268][k]" y="243">{{ b }}</text>
          <text x="2480" y="243">Bookmarks</text><text x="2707" y="243">Reading List</text><text x="1792" y="255">Pup</text><text x="2171" y="255">0/0</text>
          <text x="128" y="338" font-weight="600">Augalų apsaugos produkto pavadinimas, forma,</text><text x="1160" y="338">1</text><text x="1202" y="338">/ 31</text><text x="1400" y="338">99%</text>
          <text x="99" y="1754">Insecticide_5.pdf</text><text x="564" y="1754">database-of-aut....xlsx</text><text x="1031" y="1754">ES-00503.pdf</text><text x="2680" y="1754" fill="#8ab4f8">Show all</text>
        </g>
        <path d="M1310 328h28M1510 328h24M1522 316v24M1606 314h34v28h-34zM2646 312v32M2712 320h28v16h-28zM2806 312v32M2846 1740l16 16M2862 1740l-16 16" fill="none" stroke="#e8e8ee" stroke-width="5" />
        <g><rect x="210" y="84" width="32" height="32" fill="#4285f4" /><path d="M704 84l16 30h-32z" fill="#34a853" /><rect x="1167" y="84" width="30" height="30" fill="#4e8df5" /><rect x="1647" y="84" width="26" height="32" fill="#f4141c" /><rect x="2125" y="84" width="26" height="32" fill="#f4141c" /><circle cx="2510" cy="170" r="18" fill="#e0161c" /><rect x="2558" y="154" width="32" height="32" fill="#e72434" /><rect x="2624" y="154" width="26" height="32" fill="#eee" /><circle cx="2766" cy="170" r="22" fill="#ec407a" /><circle cx="2366" cy="170" r="24" fill="#5c5d60" /></g>
      </svg>
    </aside>
  </div>
</template>

<style>
html, body { height: 100%; overflow: hidden; background: #1b1e4e; }
</style>

<style scoped>
* { box-sizing: border-box; }
button { background: none; border: 0; padding: 0; margin: 0; font: inherit; color: inherit; display: flex; align-items: center; justify-content: center; }
input { border: 0; padding: 0; margin: 0; outline: 0; background: none; font: inherit; color: inherit; }
a { color: inherit; text-decoration: none; }
svg { display: block; flex: none; }
.ui { font-family: Inter, "Liberation Sans", sans-serif; }
.mini { font-family: "DejaVu Sans Condensed", "DejaVu Sans", sans-serif; font-size: 23px; fill: #000; }

.desktop {
  position: relative; height: 100vh; display: flex; flex-direction: column; overflow: hidden;
  font: 24px Inter, "Liberation Sans", sans-serif; color: #fff;
  background: linear-gradient(180deg, #21215a 0 37%, #7c1422 37%, #4c0a1a 49%, #57297a 49%, #7242a8 59%, #27496f 59%, #2f2f68 70%, #4a1a55 78%, #2c0612 88%, #38061a 100%);
}

.menubar {
  flex: none; height: 50px; padding: 0 36px 2px 38px; display: flex; justify-content: space-between; align-items: center;
  font-size: 25px; color: #ececf0; text-shadow: 0 2px 4px rgba(0, 0, 0, .35);
  background:
    linear-gradient(90deg, #4c7fae 0, #3a86b4 580px, #0a0c30 580px, #14163e 100%) 0 48px / 100% 2px no-repeat,
    linear-gradient(90deg, #1f4066 0, #1e3a63 16%, #1b2753 33%, #1b1f4c 52%, #1f1f50 100%);
}
.menus { display: flex; align-items: center; gap: 43px; }
.strong { font-weight: 700; }
.status { display: flex; align-items: center; gap: 35px; }
.clock { display: flex; gap: 20px; font-size: 26px; }

.window {
  position: relative; flex: 1; min-height: 0; margin-right: 6px; display: flex; flex-direction: column; overflow: hidden;
  border: 2px solid #5d5e61; border-top-color: #727377; border-radius: 20px; background: #202124; box-shadow: 0 0 0 1px #050505;
}

.tabstrip { flex: none; height: 82px; padding-top: 14px; display: flex; }
.lights { flex: none; width: 185px; height: 54px; padding-left: 40px; display: flex; align-items: center; gap: 16px; }
.light { width: 24px; height: 24px; border-radius: 50%; }
.red { background: #ff5f57; }
.amber { background: #febc40; }
.green { background: #34c748; }
.tab { position: relative; flex: 0 1 478px; min-width: 0; display: flex; align-items: center; padding: 0 20px 0 23px; color: #bfc1c5; }
.tab::after { content: ""; position: absolute; right: 0; top: 14px; width: 2px; height: 40px; background: #57595c; }
.tab.active::after, .tab.bare::after { display: none; }
.tab.active { color: #f6f7f8; background: #35363a; border-radius: 16px 16px 0 0; }
.favicon { width: 32px; margin-right: 16px; }
.tab-title { flex: 1; min-width: 0; overflow: hidden; white-space: nowrap; -webkit-mask-image: linear-gradient(90deg, #000 calc(100% - 50px), transparent); mask-image: linear-gradient(90deg, #000 calc(100% - 50px), transparent); }
.close { width: 22px; height: 22px; margin-left: 16px; }
.newtab { width: 88px; }
.tabsearch { margin-left: auto; width: 84px; }

.toolbar { flex: none; height: 72px; display: flex; align-items: center; padding-left: 10px; background: #35363a; }
.nav { width: 64px; height: 56px; }
.omnibox { flex: 1; min-width: 0; height: 56px; margin-left: 13px; padding: 0 18px 0 22px; display: flex; align-items: center; border-radius: 28px; background: #202124; font-size: 27px; }
.insecure { margin-left: 18px; padding-right: 16px; line-height: 32px; color: #9aa0a6; border-right: 2px solid #75787c; }
.url { flex: 1; min-width: 0; margin-left: 18px; font-size: 28px; color: transparent; background: linear-gradient(90deg, #fff 124px, #929599 124px); -webkit-background-clip: text; background-clip: text; }
.findchip { width: 64px; height: 48px; border-radius: 24px; background: #58595c; margin-right: 14px; }
.extensions { display: flex; align-items: center; padding: 0 10px 0 12px; }
.ext { width: 64px; height: 44px; }
.avatar { width: 44px; margin: 0 10px; border-radius: 50%; background: #ec407a; font-size: 24px; }

.bookmarks { flex: none; height: 66px; padding: 0 27px 10px 29px; display: flex; align-items: center; gap: 33px; background: #35363a; border-bottom: 2px solid #28292a; }
.bookmark { display: flex; align-items: center; gap: 16px; white-space: nowrap; }
.apps { gap: 19px; }
.other { margin-left: auto; }
.reading { margin-left: -11px; padding-left: 18px; border-left: 2px solid #6a6b6e; gap: 18px; height: 34px; }

.pdfbar { position: relative; z-index: 2; flex: none; height: 112px; display: flex; align-items: center; background: #323639; box-shadow: 0 2px 14px rgba(0, 0, 0, .55); font-family: Roboto, "Liberation Sans", sans-serif; font-size: 26px; }
.side { flex: 1; min-width: 0; display: flex; align-items: center; }
.burger { width: 32px; margin: 0 52px 0 50px; }
.doc-title { margin: 0; font-size: 28px; font-weight: 500; line-height: 36px; white-space: nowrap; }
.controls { display: flex; align-items: center; }
.field { height: 40px; background: #191b1c; text-align: center; }
.page-no { width: 48px; }
.zoom { width: 92px; }
.total { width: 98px; padding-left: 10px; }
.sep { width: 2px; height: 30px; background: #606466; }
.fit-sep { margin-right: 24px; }
.zoom-btn { width: 88px; height: 40px; }
.tool { width: 72px; height: 40px; }
.end { justify-content: flex-end; }
.action { width: 80px; height: 40px; }
.action:last-child { margin-right: 26px; }

.content { flex: 1; min-height: 0; display: flex; background: #525659; }
.sidebar { flex: none; width: 568px; overflow: hidden; padding-top: 12px; display: flex; flex-direction: column; align-items: center; background: #323639; font: 28px Roboto, "Liberation Sans", sans-serif; }
.thumb { flex: none; height: 294px; flex-direction: column; justify-content: flex-start; color: #fff; }
.sheet { box-sizing: content-box; border: 12px solid transparent; }
.thumb:not(.current) .sheet { opacity: .5; }
.current .sheet { border-color: #8ab4f8; }
.thumb-no { line-height: 36px; margin-top: 8px; }
.thumb:last-child { margin-bottom: 294px; }
.track { flex: none; background: #fafafa; padding: 0 8px; }
.side-track { width: 32px; border-right: 2px solid #3c4043; padding-top: 28px; }
.main-track { width: 28px; border-left: 1px solid #d8d8d8; padding: 176px 4px 0 6px; }
.grip { border-radius: 9px; background: #c1c1c1; }
.long { width: 16px; height: 158px; }
.short { height: 36px; }
.viewer { flex: 1; min-width: 0; overflow: hidden; padding: 10px 10px 0 8px; }
.page { background: #fff; padding: 221px 37px 132px 133px; box-shadow: 0 4px 16px rgba(0, 0, 0, .55); margin-bottom: 27px; }
.next { height: 1568px; }

.registry { width: 100%; table-layout: fixed; border-collapse: collapse; color: #000; font: 23px "DejaVu Sans Condensed", "DejaVu Sans", sans-serif; }
.registry th, .registry td { border: 2px solid #000; padding: 0 0 0 13px; font-weight: 400; text-align: left; vertical-align: top; }
.registry th { padding: 0; }
.registry th.first { padding-left: 14px; }
.cell { height: 171px; padding-top: 1px; line-height: 29px; white-space: nowrap; display: flex; flex-direction: column; }
.registry tbody tr:nth-child(3n + 2) .cell { height: 172px; }
.mid { justify-content: center; text-align: center; }
.first .mid { text-align: left; }

.shelf { flex: none; height: 112px; display: flex; border-top: 2px solid #28292a; background: #35363a; font-size: 26px; }
.download { position: relative; flex: 0 1 466px; min-width: 0; display: flex; align-items: center; justify-content: space-between; padding: 2px 36px 0 34px; }
.download:first-child { flex-basis: 472px; padding-left: 40px; }
.download::after { content: ""; position: absolute; right: 0; top: 12px; bottom: 10px; width: 2px; background: #68696c; }
.hover { background: #444548; }
.file { gap: 28px; }
.chevron { width: 24px; height: 24px; }

.findbar { position: absolute; z-index: 3; top: 145px; right: 406px; width: 706px; height: 99px; padding: 0 16px 0 32px; display: flex; align-items: center; border-radius: 8px; background: #202124; box-shadow: 0 2px 8px rgba(0, 0, 0, .5); color: #e8eaed; }
.find { field-sizing: content; }
.caret { width: 2px; height: 30px; background: #e8eaed; }
.count { margin-left: auto; padding-right: 32px; margin-right: 16px; line-height: 64px; border-right: 2px solid #44464a; color: #b4b7bb; }
.find-btn { width: 64px; height: 64px; }

.capture { position: absolute; z-index: 5; right: 24px; bottom: 24px; padding: 8px; border-radius: 8px; background: #000; box-shadow: 0 0 70px rgba(0, 0, 0, .22); }
.capture svg:first-child { border: 1px solid #fff; box-sizing: content-box; }
.capture svg svg { border: 0; }
</style>
